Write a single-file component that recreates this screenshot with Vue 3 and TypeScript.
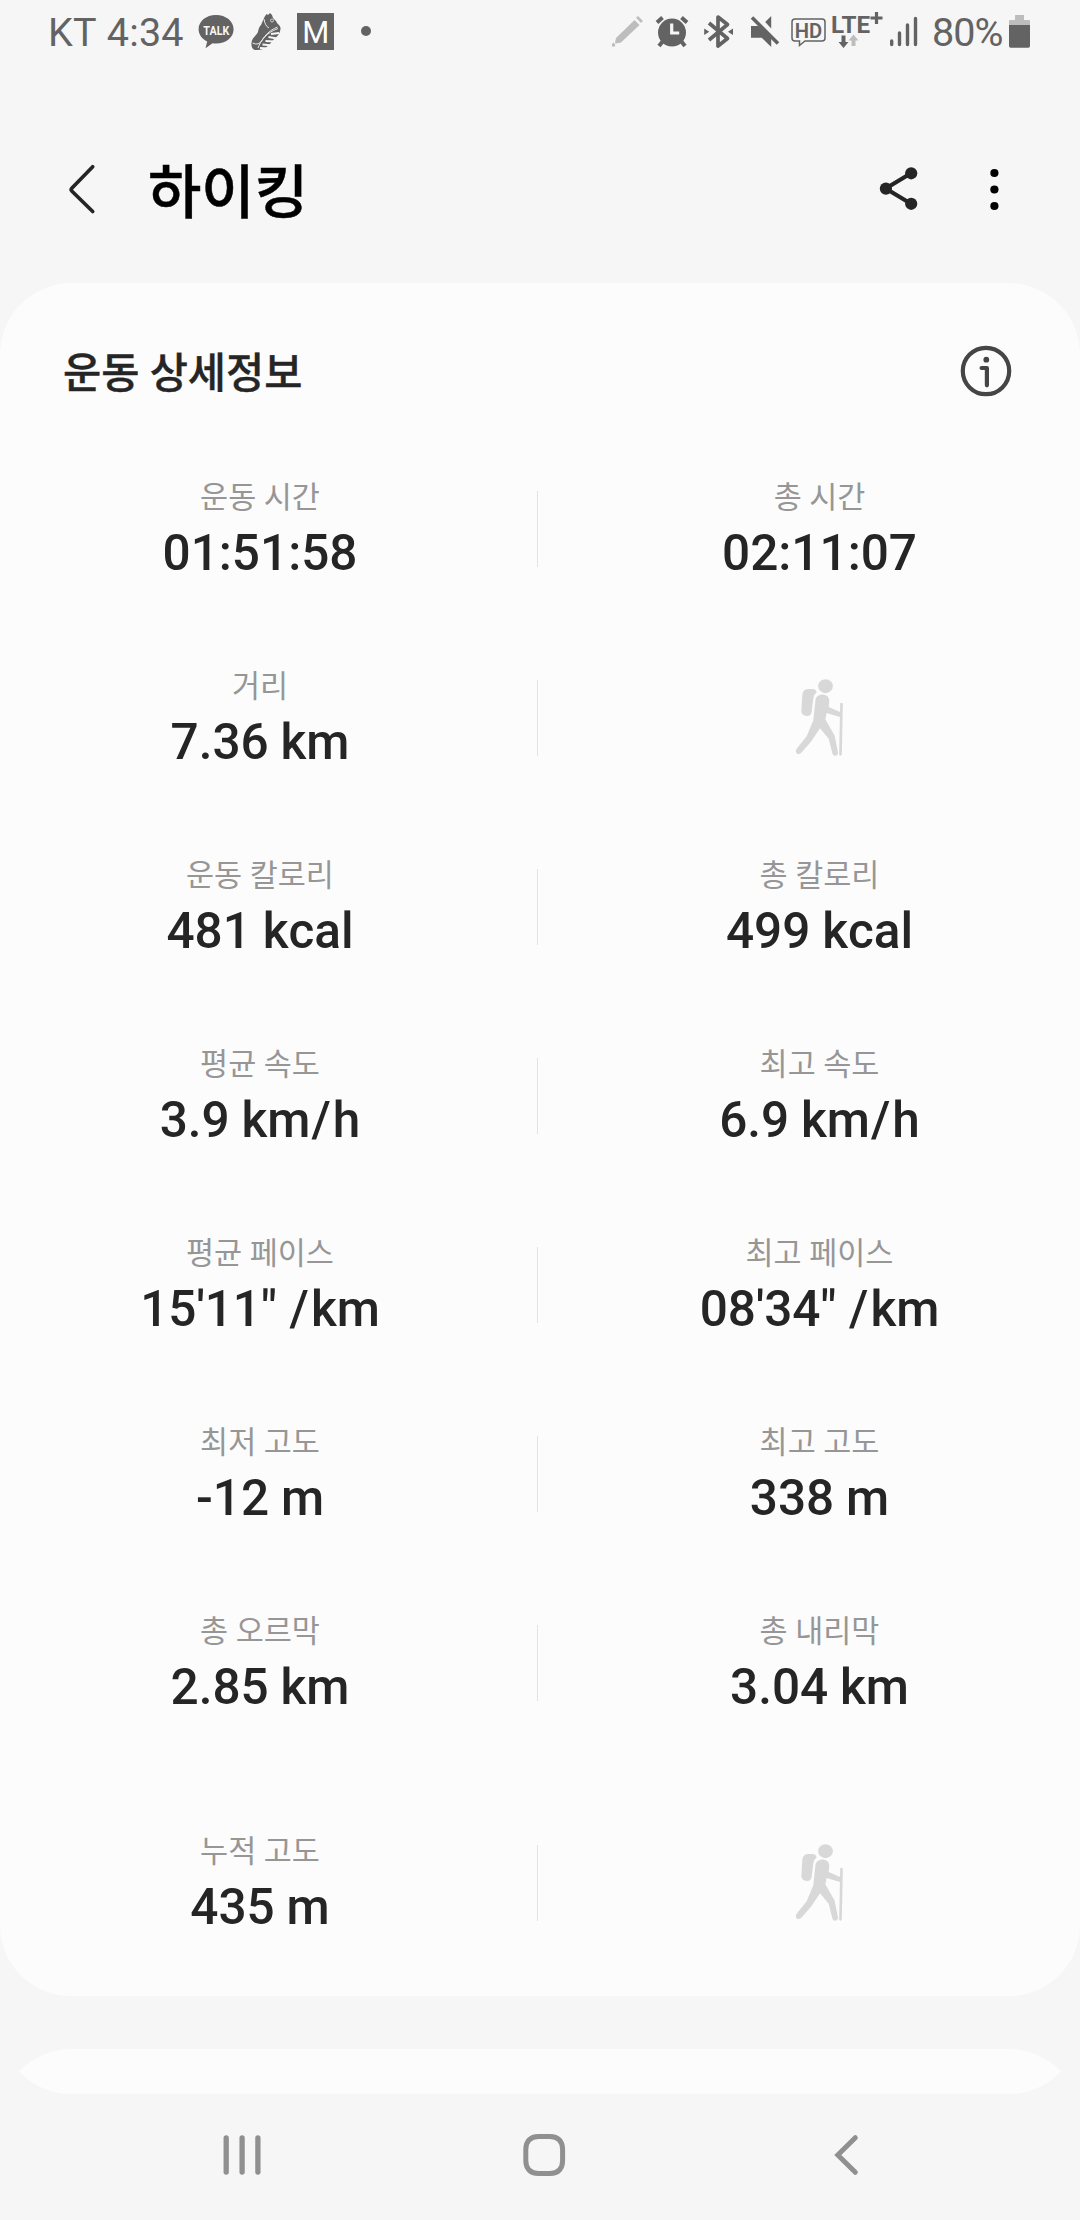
<script setup lang="ts">
interface Metric {
  label: string
  value: string
}
interface MetricRow {
  left: Metric
  right: Metric | null
  spaced?: boolean
}

const rows: MetricRow[] = [
  { left: { label: '운동 시간', value: '01:51:58' }, right: { label: '총 시간', value: '02:11:07' } },
  { left: { label: '거리', value: '7.36 km' }, right: null },
  { left: { label: '운동 칼로리', value: '481 kcal' }, right: { label: '총 칼로리', value: '499 kcal' } },
  { left: { label: '평균 속도', value: '3.9 km/h' }, right: { label: '최고 속도', value: '6.9 km/h' } },
  { left: { label: '평균 페이스', value: '15\'11" /km' }, right: { label: '최고 페이스', value: '08\'34" /km' } },
  { left: { label: '최저 고도', value: '-12 m' }, right: { label: '최고 고도', value: '338 m' } },
  { left: { label: '총 오르막', value: '2.85 km' }, right: { label: '총 내리막', value: '3.04 km' } },
  { left: { label: '누적 고도', value: '435 m' }, right: null, spaced: true },
]

// Splits around the slash so that it can be given its own side bearings.
const parts = (value: string): string[] => value.split(/(\/)/)
</script>

<template>
  <div class="screen">
    <header class="status">
      <div class="group">
        <span class="clock">KT 4:34</span>
        <svg width="48" height="70" viewBox="194 0 48 70">
          <path d="M216 15c10 0 17.600 6.200 17.600 14.300S226 43.600 216 43.600q-1.800 0-3.500-.3l-7 5 1.700-6.800C202 39 198.600 34.700 198.600 29.300 198.600 21.200 206 15 216 15z" fill="#636363" />
          <text x="203.300" y="34.500" font-size="12.500" font-weight="700" fill="#f6f6f6" textLength="26" lengthAdjust="spacingAndGlyphs">TALK</text>
        </svg>
        <svg width="48" height="70" viewBox="242 0 48 70">
          <path d="M264.500 17l2-3 1.500 1 2-2 2 2 1 3 3 3c1 3 4 4 4.600 7-.6 8-5.600 9.500-8.600 13.500-2.500 3.500-7 8.500-15 8.500-4 .3-5.500-1.500-5.600-7 .2-5 4.600-7 6.600-11 .5-3 1-5 3-7z" fill="#636363" />
          <path d="M264 19q1 7 5 9M252.500 43q6 3 9.500-2.500c3-5 7-10 15.500-13.500M258 48c3-8 8-15 20-19.500" fill="none" stroke="#f6f6f6" stroke-width=".9" />
          <path d="M271 34l8-1M268.500 37l8.500 1.500M265.500 41l9 .5M262.500 44.500l10 1M260 48l8 .5" fill="none" stroke="#f6f6f6" stroke-width="1.800" />
          <circle cx="272" cy="20.500" r="1.500" fill="none" stroke="#f6f6f6" stroke-width=".7" />
        </svg>
        <svg width="90" height="70" viewBox="290 0 90 70">
          <path d="M297 13h37v37h-37z" fill="#636363" />
          <text x="315.700" y="42.700" font-size="31" font-weight="400" text-anchor="middle" fill="#fff">M</text>
          <circle cx="366" cy="31" r="5" fill="#636363" />
        </svg>
      </div>
      <div class="group">
        <svg width="42" height="70" viewBox="606 0 42 70">
          <path d="M612 46.500l1-4 2.500 2.500zM616 38l18.500-18 5 5L621 42.500l-5 1-1-.8zM636 17.800l2-1.800 5 5-2 2z" fill="#bdbdbd" />
          <circle cx="613.500" cy="45" r="1.700" fill="#bdbdbd" />
        </svg>
        <svg width="48" height="70" viewBox="648 0 48 70">
          <circle cx="672" cy="32.600" r="14" fill="#636363" />
          <path d="M657 22.500l5.500-5M687 22.500l-5.500-5M663 41l-4 5M681 41l4 5" stroke="#636363" stroke-width="4" />
          <path d="M671.700 23.500v9.500h7.500" fill="none" stroke="#f6f6f6" stroke-width="3.200" />
        </svg>
        <svg width="46" height="70" viewBox="696 0 46 70">
          <path d="M709 23l18.500 15.500L718 46V17l9.500 7.500L709 40" fill="none" stroke="#636363" stroke-width="3.700" stroke-linejoin="round" />
          <path d="M704.200 28.500l5 3.300-5 3.300zM733 28.500l-5 3.300 5 3.300z" fill="#636363" />
        </svg>
        <svg width="44" height="70" viewBox="742 0 44 70">
          <path d="M751 26h7.500l12.700 12V47l-9.500-9.300H751zM771.200 16v12.500l-6-6.500z" fill="#636363" />
          <path d="M752 17.500l26 26" stroke="#636363" stroke-width="3.500" />
        </svg>
        <svg width="43" height="70" viewBox="786 0 43 70">
          <path d="M795 19h27q3 0 3 3v16q0 3-3 3h-17l-5.500 4.500V41H795q-3 0-3-3V22q0-3 3-3z" fill="none" stroke="#636363" stroke-width="1.500" />
          <text x="794.700" y="37.500" font-size="20.500" font-weight="600" fill="#636363" textLength="27.500" lengthAdjust="spacingAndGlyphs">HD</text>
        </svg>
        <svg width="57" height="70" viewBox="829 0 57 70">
          <path d="M876.500 12v12M870.500 18h12" stroke="#636363" stroke-width="3.200" />
          <text x="831" y="32.900" font-size="24" font-weight="700" fill="#636363" textLength="39" lengthAdjust="spacingAndGlyphs">LTE</text>
          <path d="M841.500 35.500h4V42h3l-5 6-5-6h3z" fill="#636363" />
          <path d="M851.500 46h4v-5.500h3l-5-6-5 6h3z" fill="#bdbdbd" />
        </svg>
        <svg width="46" height="70" viewBox="886 0 46 70">
          <path d="M891.700 41v3.500M899.500 33v11.500M907.500 25v19.500M915.500 18.500v26" stroke="#636363" stroke-width="3.400" stroke-linecap="round" />
        </svg>
        <span class="percent">80%</span>
        <svg width="75" height="70" viewBox="1005 0 75 70">
          <path d="M1015 15h9v5h5q1 0 1 1v4h-21v-4q0-1 1-1h5z" fill="#bdbdbd" />
          <path d="M1009 25h21v21q0 1.700-1.700 1.700h-17.600q-1.700 0-1.700-1.700z" fill="#636363" />
        </svg>
      </div>
    </header>

    <div class="appbar">
      <svg width="148" height="213" viewBox="0 70 148 213">
        <path d="M92.700 166.800L72 188q-1.600 1.600 0 3.200l20.700 20.300" fill="none" stroke="#252525" stroke-width="3.700" stroke-linecap="round" />
      </svg>
      <h1>하이킹</h1>
      <svg class="actions" width="220" height="213" viewBox="860 70 220 213">
        <path d="M911 173.300l-25.300 15.200 25.300 15.200" fill="none" stroke="#252525" stroke-width="4.200" />
        <g fill="#252525">
          <circle cx="911.200" cy="173.300" r="6.100" />
          <circle cx="885.900" cy="188.600" r="6.100" />
          <circle cx="911.200" cy="203.800" r="6.100" />
        </g>
        <circle cx="994.400" cy="173" r="4.100" />
        <circle cx="994.400" cy="189.500" r="4.100" />
        <circle cx="994.400" cy="206" r="4.100" />
      </svg>
    </div>

    <main class="scroll">
      <section class="card">
        <div class="card-head">
          <h2>운동 상세정보</h2>
          <svg width="54" height="54" viewBox="958.700 343.700 54 54">
            <circle cx="985.700" cy="370.700" r="23.200" fill="none" stroke="#454545" stroke-width="4.200" />
            <circle cx="986" cy="359.400" r="2.900" fill="#454545" />
            <path d="M981.300 367.700h5.300v17.300" fill="none" stroke="#454545" stroke-width="4.200" stroke-linecap="round" stroke-linejoin="round" />
          </svg>
        </div>
        <div v-for="row in rows" :key="row.left.label" class="row" :class="{ spaced: row.spaced }">
          <div class="cell">
            <span class="label">{{ row.left.label }}</span>
            <span class="value"><span v-for="(part, i) in parts(row.left.value)" :key="i" :class="{ slash: part === '/' }">{{ part }}</span></span>
          </div>
          <i class="divider"></i>
          <div class="cell">
            <template v-if="row.right">
              <span class="label">{{ row.right.label }}</span>
              <span class="value"><span v-for="(part, i) in parts(row.right.value)" :key="i" :class="{ slash: part === '/' }">{{ part }}</span></span>
            </template>
            <svg v-else width="60" height="90" viewBox="270 640 180 270" fill="#d8d8d8">
              <ellipse cx="376.500" cy="679.500" rx="22" ry="21" />
              <path d="M324 688h14q10 1 12 10-8 6-10 18l-5 40q-2 13-14 13-17-1-17-15l3-48q1-17 17-18z" />
              <path d="M346 724C347 698 388 698 388 724L386 742 420 757V772L380 760 376 779 404 828 414 878C415 891 399 892 397 881L386 837 360 806 333 846 303 880C295 889 282 878 290 867L320 830 340 782z" />
              <path d="M424.500 733l-3 151" fill="none" stroke="#d8d8d8" stroke-width="8" stroke-linecap="round" />
            </svg>
          </div>
        </div>
      </section>
      <section class="card next"></section>
    </main>

    <nav class="navbar">
      <svg width="302" height="126" viewBox="91 2094 302 126">
        <path d="M226.200 2138v34M242.100 2138v34M257.900 2138v34" stroke="#909090" stroke-width="5.300" stroke-linecap="round" />
      </svg>
      <svg width="302" height="126" viewBox="393 2094 302 126">
        <path d="M538.500 2136.500h11.500c8.500 0 12.600 5 12.600 13v11c0 8-4.100 13-12.600 13h-11.500c-8.500 0-12.700-5-12.700-13v-11c0-8 4.200-13 12.700-13z" fill="none" stroke="#909090" stroke-width="5" />
      </svg>
      <svg width="302" height="126" viewBox="695 2094 302 126">
        <path d="M855.300 2137.700l-17.500 17.300 17.500 17.300" fill="none" stroke="#909090" stroke-width="5" stroke-linecap="round" />
      </svg>
    </nav>
  </div>
</template>

<style>
body {
  background: #f6f6f6;
}
</style>

<style scoped>
.screen {
  width: 1080px;
  height: 2220px;
  display: flex;
  flex-direction: column;
  overflow: hidden;
  background: #f6f6f6;
  font-family: Roboto, 'Noto Sans CJK KR', sans-serif;
}
svg {
  display: block;
  flex: none;
}
.status {
  height: 70px;
  display: flex;
  justify-content: space-between;
  color: #636363;
}
.group {
  display: flex;
}
.clock,
.percent {
  font-size: 39.500px;
  line-height: 66px;
  white-space: nowrap;
}
.clock {
  box-sizing: border-box;
  width: 194px;
  padding-left: 48px;
  font-kerning: none;
  letter-spacing: 0.200px;
}
.percent {
  width: 73px;
  letter-spacing: -1px;
}
.appbar {
  height: 213px;
  display: flex;
}
h1 {
  margin: 0;
  font-size: 58px;
  font-weight: 500;
  line-height: 246px;
  color: #000;
  -webkit-text-stroke: 0.5px #000;
}
.actions {
  margin-left: auto;
}
.scroll {
  height: 1811px;
  overflow: hidden;
  border-radius: 71px;
}
.card {
  height: 1713px;
  background: #fcfcfc;
  border-radius: 71px;
}
.card.next {
  margin-top: 53px;
}
.card-head {
  height: 176px;
  box-sizing: border-box;
  margin-bottom: 32px;
  padding: 0 67px 0 63px;
  display: flex;
  align-items: center;
  justify-content: space-between;
}
h2 {
  margin: 0 0 3px;
  font-size: 41.500px;
  font-weight: 500;
  color: #252525;
  -webkit-text-stroke: 0.4px #252525;
}
.row {
  height: 76px;
  margin-bottom: 113px;
  display: grid;
  grid-template-columns: 520px 39px 521px;
  grid-template-rows: 76px;
}
.row.spaced {
  margin-top: 144px;
}
.cell {
  display: flex;
  flex-direction: column;
  align-items: center;
  justify-content: center;
}
.label {
  margin: 4px 0 8px;
  font-size: 30.500px;
  line-height: 36px;
  white-space: nowrap;
  color: #969696;
}
.value {
  font-size: 49.500px;
  font-weight: 500;
  line-height: 58px;
  white-space: nowrap;
  word-spacing: -0.500px;
  font-kerning: none;
  color: #252525;
}
.slash {
  padding: 0 2px 0 1px;
}
.divider {
  width: 1px;
  height: 76px;
  margin-left: 17px;
  background: #e3e3e3;
}
.navbar {
  height: 126px;
  padding-left: 91px;
  display: flex;
}
</style>
